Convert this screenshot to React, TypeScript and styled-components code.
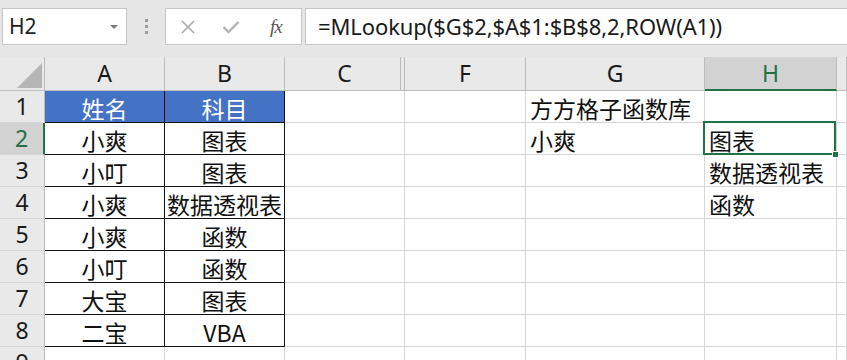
import * as React from 'react';
import styled, { createGlobalStyle, css } from 'styled-components';

const GlobalStyle = createGlobalStyle`
	html, body {
		margin: 0;
		padding: 0;
		background: #ffffff;
	}
	body {
		font-family: "Noto Sans", "Noto Sans CJK SC", sans-serif;
		color: #111;
		overflow: hidden;
	}
`;

const GREEN = '#217346';
const GRID = '#d6d6d6';

//Formula bar
const FormulaBar = styled.div`
	display: flex;
	align-items: flex-start;
	height: 57px;
	padding-top: 8px;
	box-sizing: border-box;
	background: #e6e6e6;
`;

const NameBox = styled.div`
	position: relative;
	width: 125px;
	height: 37px;
	margin-left: 2px;
	box-sizing: border-box;
	background: #fff;
	border: 1px solid #c6c6c6;
	font-size: 21px;
	line-height: 35px;
	padding-left: 6px;
	color: #222;
`;

const DropArrow = styled.span`
	position: absolute;
	right: 8px;
	top: 16px;
	width: 0;
	height: 0;
	border-left: 4px solid transparent;
	border-right: 4px solid transparent;
	border-top: 4px solid #7a7a7a;
`;

const Grip = styled.div`
	width: 38px;
	height: 37px;
	display: flex;
	flex-direction: column;
	align-items: center;
	justify-content: center;
	gap: 3px;
`;

const GripDot = styled.span`
	width: 3px;
	height: 3px;
	background: #9c9c9c;
`;

const IconBox = styled.div`
	width: 137px;
	height: 37px;
	box-sizing: border-box;
	background: #fff;
	border: 1px solid #c6c6c6;
	display: flex;
	align-items: center;
	padding-left: 14px;
	gap: 26px;
`;

const FxLabel = styled.span`
	font-family: "Liberation Serif", serif;
	font-style: italic;
	font-size: 19px;
	color: #555;
	letter-spacing: -1px;
	margin-left: 4px;
`;

const FormulaInput = styled.div`
	flex: 1;
	height: 37px;
	margin-left: 3px;
	box-sizing: border-box;
	background: #fff;
	border: 1px solid #c6c6c6;
	border-right: none;
	font-size: 22px;
	letter-spacing: -0.1px;
	line-height: 35px;
	padding-left: 12px;
	color: #1a1a1a;
	white-space: nowrap;
`;

//Sheet grid
const Sheet = styled.div`
	display: grid;
	grid-template-columns: 45px 120px 120px 120px 121px 179px 132px 1fr;
	grid-auto-rows: 32px;
	grid-template-rows: 34px;
`;

type CellKind = 'plain' | 'table' | 'title';

const Cell = styled.div<{ $kind?: CellKind; $align?: 'left' | 'center'; $selected?: boolean }>`
	position: relative;
	box-sizing: border-box;
	border-right: 1px solid ${GRID};
	border-bottom: 1px solid ${GRID};
	font-family: "Noto Sans CJK SC", "Noto Sans", sans-serif;
	font-size: 23px;
	line-height: 31px;
	padding-top: 2px;
	white-space: nowrap;
	text-align: ${p => (p.$align === 'left' ? 'left' : 'center')};
	padding-left: ${p => (p.$align === 'left' ? '4px' : '0')};
	color: #111;
	${p => (p.$kind === 'table' || p.$kind === 'title') && css`
		border-right-color: #111;
		border-bottom-color: #111;
	`}
	${p => p.$kind === 'title' && css`
		background: #4472c4;
		color: #fff;
	`}
	${p => p.$selected && css`
		&::after {
			content: '';
			position: absolute;
			left: -2px;
			top: -2px;
			right: 0;
			bottom: -1px;
			border: 2px solid ${GREEN};
			z-index: 2;
		}
		&::before {
			content: '';
			position: absolute;
			right: -3px;
			bottom: -4px;
			width: 5px;
			height: 5px;
			background: ${GREEN};
			border: 1px solid #fff;
			z-index: 3;
		}
	`}
`;

const ColHead = styled.div<{ $active?: boolean; $hidden?: boolean }>`
	box-sizing: border-box;
	background: #e9e9e9;
	border-right: 1px solid #bcbcbc;
	border-bottom: 1px solid #bcbcbc;
	font-size: 23px;
	line-height: 33px;
	text-align: center;
	color: #1a1a1a;
	${p => p.$hidden && css`
		box-shadow: inset -3px 0 0 #e9e9e9, inset -4px 0 0 #bcbcbc;
	`}
	${p => p.$active && css`
		background: #d2d2d2;
		color: ${GREEN};
		border-bottom: 2px solid ${GREEN};
	`}
`;

const Corner = styled.div`
	position: relative;
	box-sizing: border-box;
	background: #e9e9e9;
	border-right: 1px solid #bcbcbc;
	border-bottom: 1px solid #bcbcbc;
`;

const CornerTriangle = styled.span`
	position: absolute;
	right: 2px;
	bottom: 2px;
	width: 0;
	height: 0;
	border-left: 25px solid transparent;
	border-bottom: 25px solid #b5b5b5;
`;

const RowHead = styled.div<{ $active?: boolean }>`
	box-sizing: border-box;
	background: #e9e9e9;
	border-right: 1px solid #bcbcbc;
	border-bottom: 1px solid ${GRID};
	font-size: 23px;
	line-height: 31px;
	text-align: center;
	color: #1a1a1a;
	${p => p.$active && css`
		background: #d2d2d2;
		color: ${GREEN};
		border-right: 2px solid ${GREEN};
	`}
`;

const columns = ['A', 'B', 'C', 'F', 'G', 'H'];

interface RowData {
	a: string;
	b: string;
	g?: string;
	h?: string;
}

const rows: RowData[] = [
	{ a: '姓名', b: '科目', g: '方方格子函数库' },
	{ a: '小爽', b: '图表', g: '小爽', h: '图表' },
	{ a: '小叮', b: '图表', h: '数据透视表' },
	{ a: '小爽', b: '数据透视表', h: '函数' },
	{ a: '小爽', b: '函数' },
	{ a: '小叮', b: '函数' },
	{ a: '大宝', b: '图表' },
	{ a: '二宝', b: 'VBA' }
];

const CrossIcon = () => (
	<svg width="16" height="16" viewBox="0 0 16 16">
		<path d="M2 2 L14 14 M14 2 L2 14" stroke="#ababab" strokeWidth="1.6" fill="none" />
	</svg>
);

const CheckIcon = () => (
	<svg width="18" height="14" viewBox="0 0 18 14">
		<path d="M1.5 7 L6.5 12 L16.5 2" stroke="#b3b3b3" strokeWidth="2.4" fill="none" />
	</svg>
);

export default function App() {
	return (
		<>
			<GlobalStyle />
			<FormulaBar>
				<NameBox>
					H2
					<DropArrow />
				</NameBox>
				<Grip>
					<GripDot />
					<GripDot />
					<GripDot />
				</Grip>
				<IconBox>
					<CrossIcon />
					<CheckIcon />
					<FxLabel>fx</FxLabel>
				</IconBox>
				<FormulaInput>=MLookup($G$2,$A$1:$B$8,2,ROW(A1))</FormulaInput>
			</FormulaBar>
			<Sheet>
				<Corner>
					<CornerTriangle />
				</Corner>
				{columns.map(c => (
					<ColHead key={c} $active={c === 'H'} $hidden={c === 'C'}>
						{c}
					</ColHead>
				))}
				<ColHead />
				{rows.map((r, i) => {
					const kind: CellKind = i === 0 ? 'title' : 'table';
					return (
						<React.Fragment key={i}>
							<RowHead $active={i === 1}>{i + 1}</RowHead>
							<Cell $kind={kind}>{r.a}</Cell>
							<Cell $kind={kind}>{r.b}</Cell>
							<Cell />
							<Cell />
							<Cell $align="left">{r.g}</Cell>
							<Cell $align="left" $selected={i === 1}>{r.h}</Cell>
							<Cell />
						</React.Fragment>
					);
				})}
				<RowHead>9</RowHead>
				<Cell />
				<Cell />
				<Cell />
				<Cell />
				<Cell />
				<Cell />
				<Cell />
			</Sheet>
		</>
	);
}
